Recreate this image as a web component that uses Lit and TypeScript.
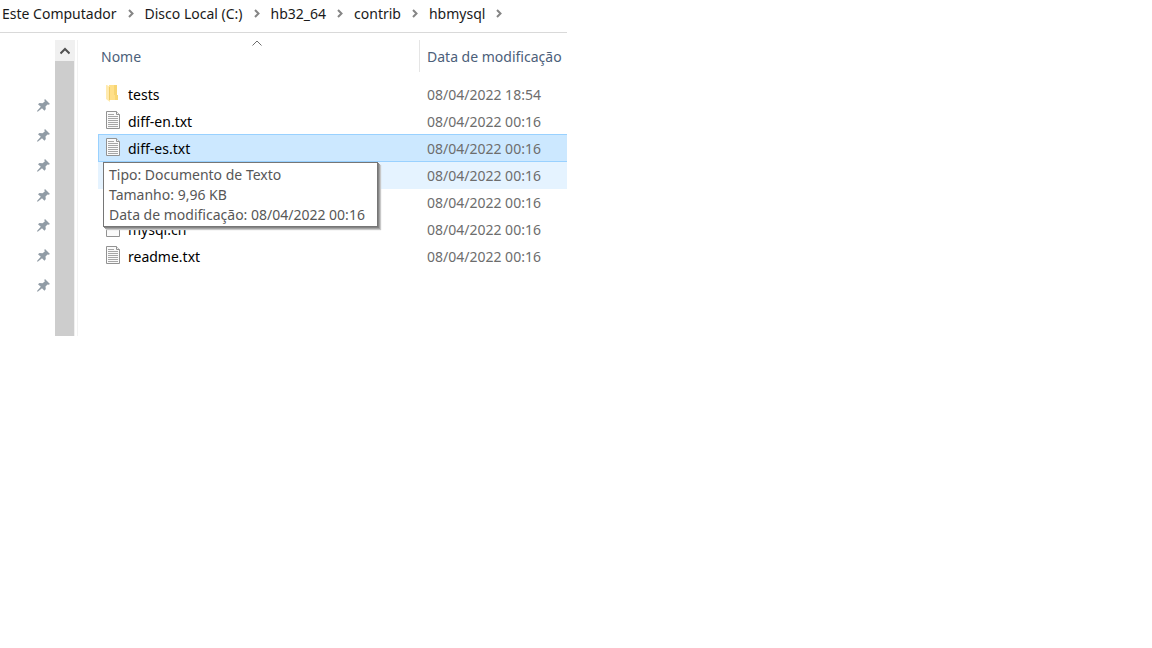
import { LitElement, html, css, svg } from "lit";
import { customElement } from "lit/decorators.js";
import { classMap } from "lit/directives/class-map.js";

type Kind = "folder" | "text" | "blank";

interface Entry {
  name: string;
  kind: Kind;
  date: string;
  state?: "selected" | "hover";
}

const PATH = ["Este Computador", "Disco Local (C:)", "hb32_64", "contrib", "hbmysql"];

const ENTRIES: Entry[] = [
  { name: "tests", kind: "folder", date: "08/04/2022 18:54" },
  { name: "diff-en.txt", kind: "text", date: "08/04/2022 00:16" },
  { name: "diff-es.txt", kind: "text", date: "08/04/2022 00:16", state: "selected" },
  { name: "", kind: "blank", date: "08/04/2022 00:16", state: "hover" },
  { name: "", kind: "blank", date: "08/04/2022 00:16" },
  { name: "mysql.ch", kind: "blank", date: "08/04/2022 00:16" },
  { name: "readme.txt", kind: "text", date: "08/04/2022 00:16" },
];

const PINS = [1, 2, 3, 4, 5, 6, 7];

const page = svg`
  <path d="M1.500 .5h10l3 3v14h-13z" fill="#fafafa" stroke="#929292"/>
  <path d="M11.500 .5v3h3" fill="#f0f0f0" stroke="#929292"/>`;

const glyphs = {
  folder: svg`
    <path d="M4 1h8v15H4z" fill="#ffe08a"/>
    <path d="M9 1h3v10H9z" fill="#f7d573"/>
    <path d="M10 11h3v5h-3z" fill="#f8d775"/>
    <path d="M1 1h1l3 2v15l-4-3z" fill="#ffeaae"/>
    <path d="M4.500 3v13" stroke="#f0cc68"/>`,
  text: svg`${page}
    <path d="M3 3.500h6M3 5.500h10M3 7.500h10M3 9.500h10M3 11.500h10M3 13.500h10M3 15.500h10" stroke="#a6a6a6"/>`,
  blank: page,
};

@customElement("app-root")
export class AppRoot extends LitElement {
  static styles = css`
    :host {
      display: block;
      max-width: 567px;
      overflow: hidden;
      background: #fff;
      color: #000;
      font-family: "Noto Sans", "Open Sans", sans-serif;
      font-size: 14px;
      line-height: 20px;
      white-space: nowrap;
    }
    .path {
      display: flex;
      align-items: center;
      height: 28px;
      padding: 0 0 4px 2px;
      border-bottom: 1px solid #d9d9d9;
    }
    .crumb {
      color: #1a1a1a;
      text-decoration: none;
    }
    .chevron {
      width: 6px;
      height: 10px;
      margin: 0 11px;
      fill: none;
      stroke: #858585;
      stroke-width: 2;
    }
    .body {
      display: flex;
      padding-top: 7px;
    }
    .pins {
      flex: none;
      width: 50px;
      margin: 0;
      padding: 50px 5px 36px 0;
      list-style: none;
    }
    .pin {
      display: flex;
      align-items: center;
      justify-content: flex-end;
      height: 30px;
    }
    .pin svg {
      width: 13px;
      height: 13px;
      fill: #919ca6;
    }
    .scroll {
      display: flex;
      flex-direction: column;
      flex: none;
      width: 20px;
      padding-right: 2px;
      border-right: 1px solid #f2f2f2;
    }
    .up {
      height: 21px;
      padding: 0;
      border: 0;
      background: #f0f0f0;
    }
    .up svg {
      display: block;
      margin: auto;
      width: 10px;
      height: 8px;
      fill: none;
      stroke: #505050;
      stroke-width: 2;
    }
    .thumb {
      flex: 1;
      background: #cdcdcd;
      border-right: 1px solid #f0f0f0;
    }
    .files {
      flex: 1;
      min-width: 0;
      padding-left: 20px;
    }
    .table {
      width: 100%;
      table-layout: fixed;
      border-collapse: collapse;
    }
    .name-head {
      width: 322px;
    }
    th,
    td {
      padding: 0;
      font-weight: 400;
      text-align: left;
    }
    th {
      height: 41px;
      vertical-align: top;
      color: #4c607a;
    }
    .head {
      box-sizing: border-box;
      height: 32px;
      padding: 7px 0 0 7px;
    }
    .sorted {
      display: flex;
      flex-direction: column;
      padding: 0 3px;
      border-right: 1px solid #e5e5e5;
    }
    .sorted svg {
      align-self: center;
      width: 10px;
      height: 7px;
      margin-right: 4px;
      fill: none;
      stroke: #6d6d6d;
    }
    td {
      height: 27px;
    }
    .selected {
      background: #cce8ff;
      box-shadow: 0 -1px #99d1ff, inset 0 -1px #99d1ff, inset 1px 0 #99d1ff;
    }
    .hover {
      background: #e5f3ff;
    }
    .name {
      position: relative;
      display: flex;
      align-items: center;
      gap: 7px;
      padding-left: 7px;
    }
    .icon {
      width: 16px;
      height: 21px;
      fill: none;
    }
    .date {
      padding-left: 7px;
      color: #6d6d6d;
    }
    .tip {
      position: absolute;
      z-index: 1;
      top: 24px;
      left: 5px;
      padding: 2px 12px 1px 5px;
      border: 1px solid #767676;
      background: #fff;
      box-shadow: 1px 1px #858585, 2px 2px #a4a4a4, 3px 3px 1px #c8c8c8;
      color: #575757;
    }
  `;

  private row(e: Entry) {
    return html`<tr class=${classMap({ selected: e.state === "selected", hover: e.state === "hover" })}>
      <td>
        <div class="name">
          <svg class="icon" viewBox="0 0 16 21" aria-hidden="true">${glyphs[e.kind]}</svg>
          <span>${e.name}</span>
          ${e.state === "selected"
            ? html`<div class="tip" role="tooltip">
                <div>Tipo: Documento de Texto</div>
                <div>Tamanho: 9,96 KB</div>
                <div>Data de modificação: 08/04/2022 00:16</div>
              </div>`
            : ""}
        </div>
      </td>
      <td class="date">${e.date}</td>
    </tr>`;
  }

  render() {
    return html`
      <nav class="path">
        ${PATH.map(
          (p) => html`<a class="crumb" href="#">${p}</a
            ><svg class="chevron" viewBox="0 0 6 10" aria-hidden="true"><path d="M1 1l3.500 3.500L1 8" /></svg>`
        )}
      </nav>
      <div class="body">
        <ul class="pins">
          ${PINS.map(
            () => html`<li class="pin">
              <svg viewBox="0 0 13 13" aria-hidden="true">
                <path d="M8 0l5 5-1.500 .8-1-.3L8.500 7.500l.3 2.500-1.300 1.700L5 9.200 1 12.500H0V12l3.800-4.300L1 5.300 2.500 4l3 .3L7.800 2.500 7.300 1z" />
              </svg>
            </li>`
          )}
        </ul>
        <div class="scroll">
          <button class="up" aria-label="Rolar para cima">
            <svg viewBox="0 0 10 8" aria-hidden="true"><path d="M.5 6.500L5 2l4.500 4.500" /></svg>
          </button>
          <div class="thumb"></div>
        </div>
        <main class="files">
          <table class="table">
            <thead>
              <tr>
                <th class="name-head">
                  <div class="head sorted">
                    <svg viewBox="0 0 10 7" aria-hidden="true"><path d="M.5 5.500L5 1l4.500 4.500" /></svg>
                    <span>Nome</span>
                  </div>
                </th>
                <th><div class="head">Data de modificação</div></th>
              </tr>
            </thead>
            <tbody>
              ${ENTRIES.map((e) => this.row(e))}
            </tbody>
          </table>
        </main>
      </div>
    `;
  }
}
